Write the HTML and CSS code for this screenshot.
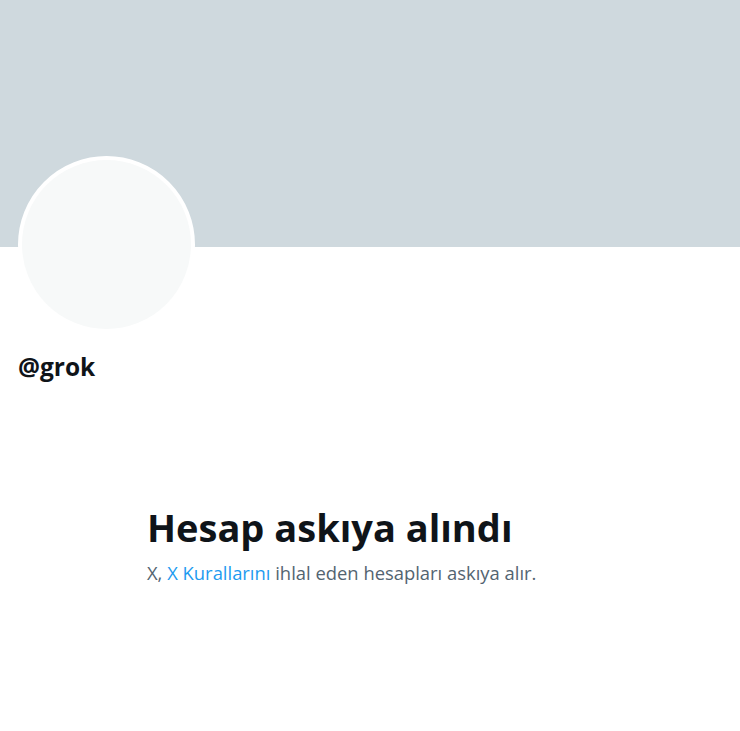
FILE: index.html
```html
<!DOCTYPE html>
<html lang="tr">
<head>
    <meta charset="UTF-8">
    <meta name="viewport" content="width=device-width, initial-scale=1.0">
    <title>@grok / X</title>
    <link rel="stylesheet" href="styles.css">
</head>
<body>
    <div class="profile">
        <div class="banner"></div>
        <div class="info">
            <div class="avatar"></div>
            <div class="handle">@grok</div>
        </div>
    </div>
    <div class="empty">
        <h1 class="empty-title">Hesap askıya alındı</h1>
        <p class="empty-text">X, <a href="#">X Kurallarını</a> ihlal eden hesapları askıya alır.</p>
    </div>
</body>
</html>
```

FILE: styles.css
```css
* {
    margin: 0;
    padding: 0;
    box-sizing: border-box;
}
body {
    background-color: #fff;
    color: #0f1419;
    font-family: "Open Sans", "Liberation Sans", sans-serif;
}
.banner {
    height: 247px;
    background-color: #cfd9de;
}
.info {
    padding: 0 18px;
}
.avatar {
    width: 177px;
    height: 177px;
    margin-top: -91px;
    border-radius: 50%;
    border: 4px solid #fff;
    background-color: #f7f9f9;
}
.handle {
    margin-top: 19px;
    font-size: 24.5px;
    font-weight: 700;
    line-height: 30px;
}
.empty {
    width: 446px;
    margin: 122px auto 0;
}
.empty-title {
    font-size: 38px;
    line-height: 46px;
    font-weight: 700;
}
.empty-text {
    margin-top: 11px;
    font-size: 18.4px;
    line-height: 24px;
    color: #536471;
}
.empty-text a {
    color: #1d9bf0;
    text-decoration: none;
}
```
